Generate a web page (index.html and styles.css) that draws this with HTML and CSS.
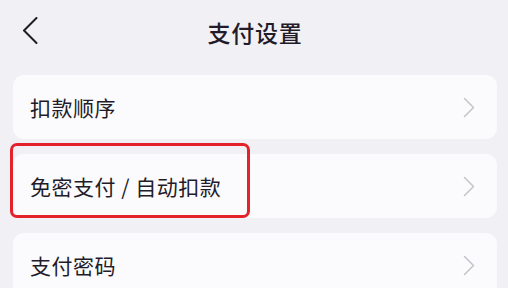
FILE: index.html
```html
<!DOCTYPE html>
<html lang="zh-CN">
<head>
    <meta charset="UTF-8">
    <meta name="viewport" content="width=device-width, initial-scale=1.0">
    <title>支付设置</title>
    <link rel="stylesheet" href="styles.css">
</head>
<body>
    <header class="topbar">
        <a class="back" href="#">
            <svg width="16" height="27" viewBox="0 0 16 27">
                <polyline points="14.5,1 2,13.5 14.5,26" fill="none" stroke="#1f1a24" stroke-width="2" stroke-linecap="round" stroke-linejoin="round"/>
            </svg>
        </a>
        <h1 class="title">支付设置</h1>
    </header>

    <div class="list">
        <a class="row" href="#">
            <span class="label">扣款顺序</span>
            <svg class="chev" width="12" height="21" viewBox="0 0 12 21">
                <polyline points="1.5,1.5 10.5,10.5 1.5,19.5" fill="none" stroke="#c4c4c9" stroke-width="1.5" stroke-linecap="round" stroke-linejoin="round"/>
            </svg>
        </a>
        <a class="row marked" href="#">
            <span class="label">免密支付 / 自动扣款</span>
            <svg class="chev" width="12" height="21" viewBox="0 0 12 21">
                <polyline points="1.5,1.5 10.5,10.5 1.5,19.5" fill="none" stroke="#c4c4c9" stroke-width="1.5" stroke-linecap="round" stroke-linejoin="round"/>
            </svg>
        </a>
        <a class="row" href="#">
            <span class="label">支付密码</span>
            <svg class="chev" width="12" height="21" viewBox="0 0 12 21">
                <polyline points="1.5,1.5 10.5,10.5 1.5,19.5" fill="none" stroke="#c4c4c9" stroke-width="1.5" stroke-linecap="round" stroke-linejoin="round"/>
            </svg>
        </a>
    </div>
</body>
</html>
```

FILE: styles.css
```css
body {
    margin: 0;
    padding: 0;
    background-color: #f1f1f5;
    font-family: "Noto Sans CJK SC", "Noto Sans", sans-serif;
    color: #231b29;
    overflow: hidden;
}
.topbar {
    position: relative;
    height: 64px;
    display: flex;
    align-items: center;
    justify-content: center;
}
.back {
    position: absolute;
    left: 22px;
    top: 17px;
    display: block;
    line-height: 0;
}
.title {
    margin: 0;
    font-size: 23px;
    font-weight: 500;
    letter-spacing: 0.8px;
    padding-left: 2px;
}
.list {
    padding: 11px 11px 0 13px;
    display: flex;
    flex-direction: column;
    gap: 15px;
}
.row {
    position: relative;
    height: 64px;
    background: #fbfbfd;
    border-radius: 11px;
    display: flex;
    align-items: center;
    justify-content: space-between;
    padding: 0 22px 0 17px;
    text-decoration: none;
    color: inherit;
}
.label {
    font-size: 21px;
    letter-spacing: 0.5px;
}
.chev {
    display: block;
}
.marked::after {
    content: "";
    position: absolute;
    left: -3px;
    top: -11px;
    width: 234px;
    height: 69px;
    border: 3px solid #e3222b;
    border-radius: 7px;
}
```
